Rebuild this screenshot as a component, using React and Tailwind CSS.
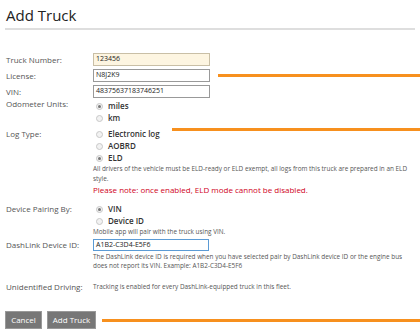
import React from "react";

const Radio = ({ checked, label }) => (
  <div className="flex items-center h-[12px]">
    <span className="w-[7px] h-[7px] rounded-full border border-[#c8c8c8] bg-[#f2f2f2] flex items-center justify-center ml-[3px] mr-[5px]">
      {checked && <span className="w-[3px] h-[3px] rounded-full bg-[#777]" />}
    </span>
    <span className="text-[8px] text-[#333] font-semibold">{label}</span>
  </div>
);

const Label = ({ children, className = "" }) => (
  <div className={`w-[87px] shrink-0 text-[8px] text-[#555] ${className}`}>{children}</div>
);

const Input = ({ value, className = "" }) => (
  <div className={`w-[117px] h-[13px] border border-[#999] flex items-center px-[2px] text-[7px] text-[#222] ${className}`}>
    {value}
  </div>
);

export default function App() {
  return (
    <div className="w-[420px] h-[334px] bg-white overflow-hidden relative" style={{ fontFamily: '"Open Sans", sans-serif' }}>
      <div className="px-[6px] pt-[3px] h-[28px] text-[15px] text-[#222] leading-[24px]">Add Truck</div>
      <div className="mx-[5px] h-[2px] bg-[#dedede]" />

      <div className="pl-[6px] mt-[23px]">
        <div className="flex items-center">
          <Label>Truck Number:</Label>
          <Input value="123456" className="bg-[#fdf5e1] border-[#c9bfa6]" />
        </div>
        <div className="flex items-center mt-[3px]">
          <Label>License:</Label>
          <Input value="N8J2K9" />
          <div className="ml-[8px] flex-1 h-[3px] bg-[#f7901e]" />
        </div>
        <div className="flex items-center mt-[3px]">
          <Label>VIN:</Label>
          <Input value="48375637183746251" />
        </div>

        <div className="flex mt-[2px]">
          <Label className="leading-[12px] -mt-[2px]">Odometer Units:</Label>
          <div>
            <Radio checked label="miles" />
            <Radio label="km" />
          </div>
        </div>

        <div className="flex mt-[4px] relative">
          <div className="absolute left-[166px] top-0 right-0 h-[3px] bg-[#f7901e]" />
          <Label className="leading-[12px]">Log Type:</Label>
          <div className="flex-1">
            <Radio label="Electronic log" />
            <Radio label="AOBRD" />
            <Radio checked label="ELD" />
            <div className="text-[6.4px] text-[#555] leading-[10px] pr-[2px]">
              All drivers of the vehicle must be ELD-ready or ELD exempt, all logs from this truck are prepared in an ELD style.
            </div>
            <div className="text-[8px] text-[#d0021b] leading-[12px]">
              Please note: once enabled, ELD mode cannot be disabled.
            </div>
          </div>
        </div>

        <div className="flex mt-[7px]">
          <Label className="leading-[12px]">Device Pairing By:</Label>
          <div>
            <Radio checked label="VIN" />
            <Radio label="Device ID" />
            <div className="text-[6.4px] text-[#555] leading-[10px]">Mobile app will pair with the truck using VIN.</div>
          </div>
        </div>

        <div className="flex mt-[2px]">
          <Label className="leading-[12px]">DashLink Device ID:</Label>
          <div className="flex-1">
            <div className="w-[116px] h-[12px] border border-[#5b9bd5] flex items-center px-[2px] text-[7px] text-[#222]">A1B2-C3D4-E5F6</div>
            <div className="text-[6.4px] text-[#555] leading-[9px] mt-[1px] pr-[4px]">
              The DashLink device ID is required when you have selected pair by DashLink device ID or the engine bus does not report its VIN. Example: A1B2-C3D4-E5F6
            </div>
          </div>
        </div>

        <div className="flex items-center mt-[11px]">
          <Label>Unidentified Driving:</Label>
          <div className="text-[6.4px] text-[#555]">Tracking is enabled for every DashLink-equipped truck in this fleet.</div>
        </div>
      </div>

      <div className="flex items-center pl-[5px] mt-[18px]">
        <button className="h-[18px] w-[37px] bg-[#777] text-white text-[8px] border border-[#999]">Cancel</button>
        <button className="h-[18px] w-[49px] ml-[5px] bg-[#777] text-white text-[8px] border border-[#999]">Add Truck</button>
        <div className="ml-[6px] flex-1 h-[3px] bg-[#f7901e]" />
      </div>
    </div>
  );
}
